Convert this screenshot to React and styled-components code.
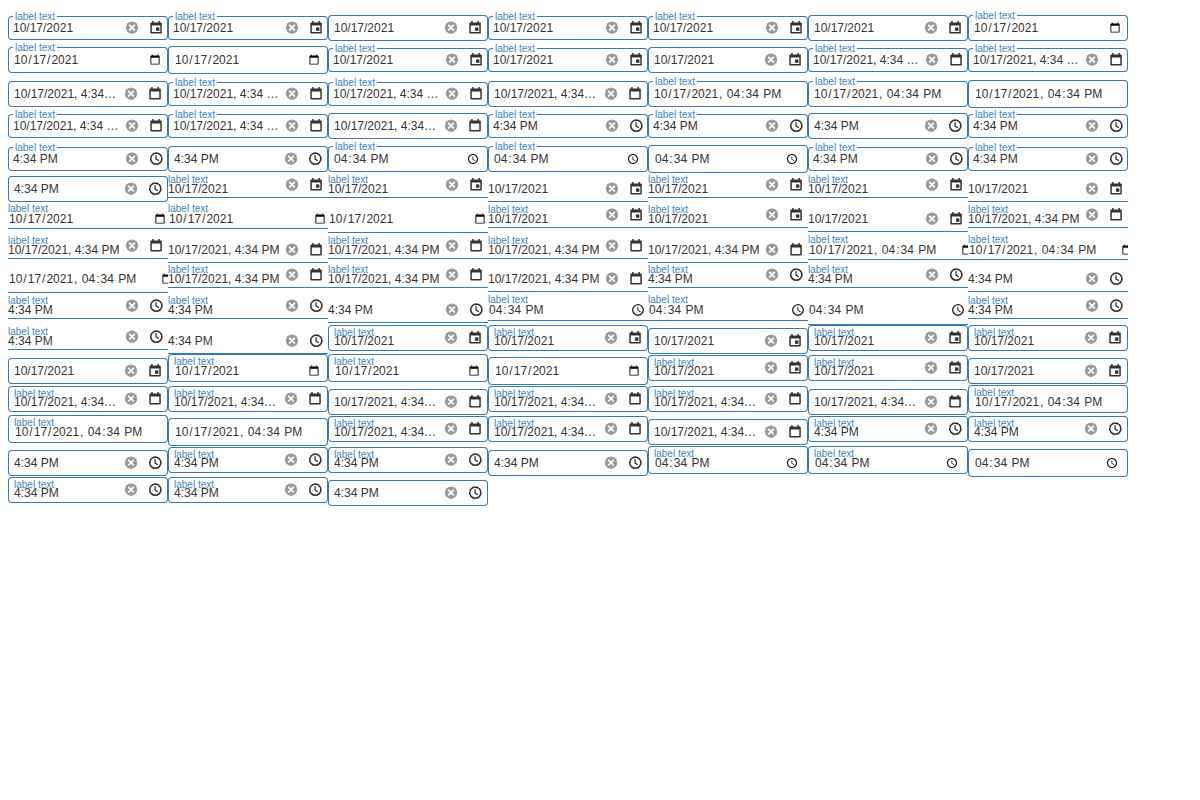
import React, { useId } from 'react';
import styled, { createGlobalStyle, css } from 'styled-components';

const BLUE = '#337ab7';
const LABEL_BLUE = '#3d84c2';
const TEXT = '#333';

const GlobalStyle = createGlobalStyle`
  *, *::before, *::after { box-sizing: border-box; }
  body {
    margin: 0;
    background: #fff;
    color: ${TEXT};
    font-family: "Liberation Sans", Arial, sans-serif;
    font-size: 12px;
  }
`;

const Page = styled.main`
  display: flex;
  flex-wrap: wrap;
  align-items: baseline;
  align-content: flex-start;
  padding: 9px 8px 8px;
`;

/* Space above and below the text line, per look */
const inset = ({ $look, $labelled }) => {
  if (!$labelled) return $look === 'underline' ? [5, 6] : [6, 6];
  if ($look === 'outline') return [5, 5];
  return $look === 'underline' ? [9, 2] : [9, 3];
};

const frame = {
  outline: css`box-shadow: inset 0 0 0 1px ${BLUE}; border-radius: 4px;`,
  underline: css`box-shadow: inset 0 -1px 0 ${BLUE};`,
  fill: css`box-shadow: inset 0 0 0 1px ${BLUE}; border-radius: 4px;`,
};

const side = ({ $look, $labelled }) => {
  if ($look === 'underline') return 0;
  return $look === 'outline' && $labelled ? 5 : 6;
};

const labelSpace = ({ $look, $labelled, $native, $kind }) => {
  if ($look !== 'outline' || !$labelled) return 0;
  return $native && $kind !== 'date' ? 7 : 6;
};

const Field = styled.div`
  position: relative;
  display: flex;
  align-items: baseline;
  width: 160px;
  margin-top: ${(p) => labelSpace(p)}px;
  padding-left: ${(p) => side(p)}px;
  padding-right: ${(p) => (p.$native ? side(p) : Math.max(side(p) - 5, 0))}px;
  ${(p) => frame[p.$look]}
`;

const Label = styled.label`
  position: absolute;
  color: ${LABEL_BLUE};
  font-size: 10px;
  line-height: 12px;
  white-space: nowrap;
  pointer-events: none;
  ${(p) => p.$look === 'outline' && css`top: -5px; left: 5px; padding: 0 2px; background: #fff; line-height: 11px;`}
  ${(p) => p.$look === 'underline' && css`top: 1px; left: 0;`}
  ${(p) => p.$look === 'fill' && css`top: 2px; left: 6px;`}
`;

const inputBase = css`
  flex: 1 1 0;
  min-width: 0;
  width: 100%;
  margin: 0;
  border: 0;
  outline: 0;
  background: transparent;
  color: ${TEXT};
  font-family: inherit;
  font-size: 12px;
`;

const TextInput = styled.input`
  ${inputBase}
  height: ${(p) => 14 + inset(p)[0] + inset(p)[1]}px;
  padding: ${(p) => inset(p)[0]}px 0 ${(p) => inset(p)[1]}px;
  line-height: 14px;
  text-overflow: ellipsis;
`;

const NativeInput = styled.input`
  ${inputBase}
  height: ${(p) => 16 + inset(p)[0] + inset(p)[1] + (p.$tall ? 1 : 0)}px;
  padding: ${(p) => inset(p)[0] + 1}px 0 ${(p) => inset(p)[1] + (p.$tall ? 2 : 1)}px;
  overflow: hidden;

  &::-webkit-datetime-edit {
    flex: ${(p) => (p.type === 'datetime-local' ? '0 0 130px' : '1 0 auto')};
    min-width: 0;
  }

  &::-webkit-calendar-picker-indicator {
    flex: none;
    width: ${(p) => (p.$tall ? 14 : 12)}px;
    height: ${(p) => (p.$tall ? 14 : 12)}px;
    margin-left: ${(p) => (p.type === 'datetime-local' ? 21 : 24)}px;
    margin-right: ${(p) => (p.type === 'time' && !p.$tall ? 1 : 0)}px;
    background-size: contain;
  }
`;

const IconButton = styled.button`
  flex: none;
  align-self: center;
  display: flex;
  align-items: center;
  justify-content: center;
  width: 24px;
  height: 16px;
  margin-bottom: ${(p) => (p.$look === 'underline' ? 1 : 0)}px;
  padding: 0;
  border: 0;
  background: none;
  color: ${(p) => (p.$muted ? '#999' : TEXT)};
  cursor: pointer;

  svg {
    display: block;
    width: 16px;
    height: 16px;
  }
`;

const Calendar = ({ children }) => (
  <>
    <path
      fill="currentColor"
      fillRule="evenodd"
      d="M4.2 1.1h1.5v1.3h4.7V1.1h1.5v1.3h.7c.7 0 1.2.5 1.2 1.2v8.8c0 .7-.5 1.2-1.2 1.2H3.5c-.7 0-1.2-.5-1.2-1.2V3.6c0-.7.5-1.2 1.2-1.2h.7V1.1zM3.8 5.4v6.7h8.5V5.4z"
    />
    {children}
  </>
);

const ICONS = {
  clear: (
    <>
      <circle cx="8" cy="7.7" r="6.2" fill="currentColor" />
      <path d="M5.2 4.9l5.6 5.6M10.8 4.9l-5.6 5.6" stroke="#fff" strokeWidth="1.7" />
    </>
  ),
  date: (
    <Calendar>
      <path d="M8 7.4h3.4v3.4H8z" fill="currentColor" />
    </Calendar>
  ),
  datetime: <Calendar />,
  time: (
    <g fill="none" stroke="currentColor">
      <circle cx="8.3" cy="7.7" r="5.6" strokeWidth="1.6" />
      <path d="M8.1 4.3v3.8l2.8 1.7" strokeWidth="1.3" />
    </g>
  ),
};

const Icon = ({ name }) => (
  <svg viewBox="0 0 16 16" aria-hidden="true">
    {ICONS[name]}
  </svg>
);

const KINDS = {
  date: { type: 'date', value: '2021-10-17', text: '10/17/2021' },
  datetime: { type: 'datetime-local', value: '2021-10-17T16:34', text: '10/17/2021, 4:34 PM' },
  time: { type: 'time', value: '16:34', text: '4:34 PM' },
};

function DateField({ look, kind, labelled, native }) {
  const id = useId();
  const { type, value, text } = KINDS[kind];
  const shared = { $look: look, $labelled: labelled };
  const name = labelled ? undefined : kind;
  return (
    <Field {...shared} $native={native} $kind={kind}>
      {native ? (
        <NativeInput
          {...shared}
          $tall={look === 'underline' && kind === 'time'}
          id={id}
          type={type}
          defaultValue={value}
          aria-label={name}
        />
      ) : (
        <>
          <TextInput {...shared} id={id} type="text" defaultValue={text} aria-label={name} />
          <IconButton type="button" $look={look} $muted aria-label="Clear">
            <Icon name="clear" />
          </IconButton>
          <IconButton type="button" $look={look} aria-label={`Choose ${kind}`}>
            <Icon name={kind} />
          </IconButton>
        </>
      )}
      {labelled && <Label $look={look} htmlFor={id}>label text</Label>}
    </Field>
  );
}

const PICKERS = [
  { labelled: true, native: false },
  { labelled: true, native: false },
  { labelled: false, native: false },
];
const NATIVES = PICKERS.map((p) => ({ ...p, native: true }));
const STATES = [...PICKERS, ...PICKERS, ...NATIVES, ...PICKERS];

export default function App() {
  return (
    <>
      <GlobalStyle />
      <Page>
        {['outline', 'underline', 'fill'].flatMap((look) =>
          Object.keys(KINDS).flatMap((kind) =>
            STATES.map((state, i) => (
              <DateField key={`${look}-${kind}-${i}`} look={look} kind={kind} {...state} />
            )),
          ),
        )}
      </Page>
    </>
  );
}
